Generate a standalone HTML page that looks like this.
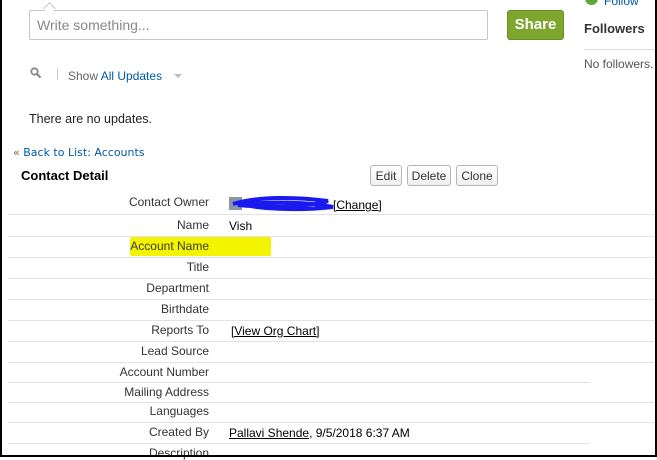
<!DOCTYPE html>
<html><head><meta charset="utf-8"><style>
html,body{margin:0;padding:0;}
body{width:657px;height:457px;position:relative;overflow:hidden;background:#fff;font-family:"Liberation Sans",Arial,sans-serif;}
.a{position:absolute;white-space:nowrap;}
.frame{position:absolute;left:0;top:-5px;width:653px;height:458px;border:2px solid #000;}
.lbl{position:absolute;right:448px;font-size:12px;color:#333;}
.line{position:absolute;left:8px;height:1px;background:#e3e3e3;}
.btn{position:absolute;top:165px;height:21px;border:1px solid #b5b5b5;border-radius:3px;background:linear-gradient(#fff,#f0f0f0);font-size:12px;color:#333;text-align:center;line-height:21px;box-sizing:border-box;}
.val{position:absolute;left:229px;font-size:12px;color:#000;}
</style></head><body>
<div class="a" style="left:29px;top:10px;width:459px;height:30px;border:1px solid #c7c7c7;border-radius:2px;box-sizing:border-box;"></div>
<div class="a" style="left:45px;top:4px;width:8px;height:8px;border-left:1px solid #c7c7c7;border-top:1px solid #c7c7c7;transform:rotate(45deg);background:#fff;"></div>
<div class="a" style="left:37px;top:17px;font-size:14px;color:#888;">Write something...</div>
<div class="a" style="left:507px;top:10px;width:57px;height:30px;background:#7ea52d;border:1px solid #6c8f22;border-radius:3px;box-sizing:border-box;color:#fff;font-weight:bold;font-size:15px;text-align:center;line-height:27px;">Share</div>
<div class="a" style="left:585px;top:-8px;width:13px;height:13px;border-radius:50%;background:#5aa83c;"></div>
<div class="a" style="left:604px;top:-6px;font-size:12px;color:#015ba7;">Follow</div>
<div class="a" style="left:584px;top:21px;font-size:13px;font-weight:bold;color:#333;">Followers</div>
<div class="a" style="left:584px;top:49px;width:73px;height:1px;background:#ddd;"></div>
<div class="a" style="left:584px;top:57px;font-size:12px;color:#555;">No followers.</div>
<svg class="a" style="left:30px;top:67px" width="12" height="12" viewBox="0 0 12 12"><circle cx="4.5" cy="4.5" r="3.2" fill="none" stroke="#888" stroke-width="1.8"/><path d="M7 7l3.5 3.5" stroke="#888" stroke-width="2.2"/></svg>
<div class="a" style="left:57px;top:68px;width:1px;height:12px;background:#ccc;"></div>
<div class="a" style="left:68px;top:69px;font-size:12px;color:#666;">Show <span style="color:#015ba7">All Updates</span></div>
<div class="a" style="left:174px;top:74px;width:0;height:0;border-left:4px solid transparent;border-right:4px solid transparent;border-top:4px solid #bbb;"></div>
<div class="a" style="left:29px;top:112px;font-size:12.5px;color:#222;">There are no updates.</div>
<div class="a" style="left:13px;top:146px;font-family:'DejaVu Sans',sans-serif;font-size:11px;color:#015ba7;"><span style="color:#666">«</span> Back to List: Accounts</div>
<div class="a" style="left:21px;top:168px;font-size:13px;font-weight:bold;color:#000;">Contact Detail</div>
<div class="btn" style="left:370px;width:32px;">Edit</div>
<div class="btn" style="left:407px;width:44px;">Delete</div>
<div class="btn" style="left:456px;width:42px;">Clone</div>

<div class="a" style="left:130px;top:237px;width:141px;height:19px;background:#f4f400;border-radius:2px;"></div>

<div class="lbl" style="top:195px">Contact Owner</div>
<div class="lbl" style="top:218px">Name</div>
<div class="lbl" style="top:239px;color:#3b3b20">Account Name</div>
<div class="lbl" style="top:260px">Title</div>
<div class="lbl" style="top:281px">Department</div>
<div class="lbl" style="top:302px">Birthdate</div>
<div class="lbl" style="top:323px">Reports To</div>
<div class="lbl" style="top:344px">Lead Source</div>
<div class="lbl" style="top:365px">Account Number</div>
<div class="lbl" style="top:385px">Mailing Address</div>
<div class="lbl" style="top:404px">Languages</div>
<div class="lbl" style="top:425px">Created By</div>
<div class="lbl" style="top:446px">Description</div>

<div class="line" style="top:214px;right:0"></div>
<div class="line" style="top:236px;right:0"></div>
<div class="line" style="top:257px;right:0"></div>
<div class="line" style="top:278px;right:0"></div>
<div class="line" style="top:299px;right:0"></div>
<div class="line" style="top:320px;right:0"></div>
<div class="line" style="top:341px;right:0"></div>
<div class="line" style="top:362px;right:0"></div>
<div class="line" style="top:382px;width:582px"></div>
<div class="line" style="top:402px;right:0"></div>
<div class="line" style="top:422px;right:0"></div>
<div class="line" style="top:443px;width:582px"></div>

<div class="a" style="left:229px;top:197px;width:13px;height:13px;background:#8a96a6;"></div>
<svg class="a" style="left:228px;top:193px" width="110" height="22" viewBox="0 0 110 22"><path d="M5 11 C30 3,70 4,100 8 C80 14,40 15,10 12 C40 8,80 9,105 14 C70 18,30 16,8 10" fill="none" stroke="#1a1aef" stroke-width="4"/></svg>
<div class="val" style="top:198px;left:333px;text-decoration:underline">[Change]</div>
<div class="val" style="top:219px">Vish</div>
<div class="val" style="top:324px;left:231px"><u>[View Org Chart]</u></div>
<div class="val" style="top:426px"><u>Pallavi Shende</u>, 9/5/2018 6:37 AM</div>
<div class="frame"></div>
</body></html>
